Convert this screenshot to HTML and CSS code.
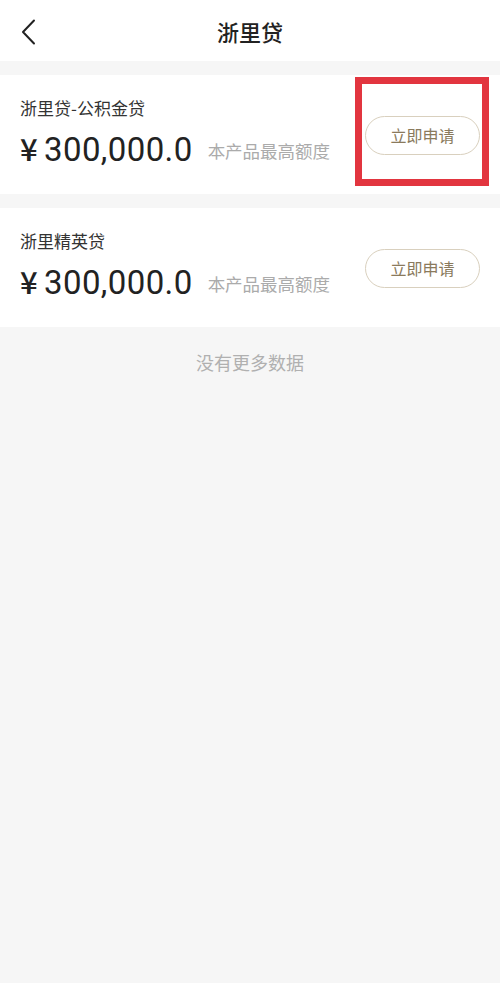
FILE: index.html
```html
<!DOCTYPE html>
<html lang="zh-CN">
<head>
<meta charset="utf-8">
<title>浙里贷</title>
<link rel="stylesheet" href="styles.css">
</head>
<body>
<header class="nav">
  <svg class="back" width="16" height="26" viewBox="0 0 16 26"><path d="M14 1.5 L3 13 L14 24.5" fill="none" stroke="#222" stroke-width="2" stroke-linecap="round" stroke-linejoin="round"/></svg>
  <h1 class="nav-title">浙里贷</h1>
</header>
<main class="list">
  <section class="card">
    <div class="info">
      <div class="name">浙里贷-公积金贷</div>
      <div class="amount-row"><span class="amount"><span class="yen">¥</span>300,000.0</span><span class="hint">本产品最高额度</span></div>
    </div>
    <button class="apply">立即申请</button>
    <div class="mark"></div>
  </section>
  <section class="card">
    <div class="info">
      <div class="name">浙里精英贷</div>
      <div class="amount-row"><span class="amount"><span class="yen">¥</span>300,000.0</span><span class="hint">本产品最高额度</span></div>
    </div>
    <button class="apply">立即申请</button>
  </section>
  <p class="nomore">没有更多数据</p>
</main>
</body>
</html>
```
FILE: styles.css
```css
html, body {
  margin: 0;
  padding: 0;
  background: #f6f6f6;
  font-family: Roboto, "Noto Sans CJK SC", sans-serif;
  color: #222;
}
.nav {
  height: 61px;
  background: #fff;
  display: flex;
  align-items: center;
  justify-content: center;
  position: relative;
}
.back {
  position: absolute;
  left: 20px;
  top: 19px;
}
.nav-title {
  margin: 0;
  font-size: 22px;
  font-weight: 500;
  color: #222;
  font-family: "Noto Sans CJK SC", sans-serif;
}
.list {
  padding-top: 14px;
  display: flex;
  flex-direction: column;
  gap: 14px;
}
.card {
  background: #fff;
  height: 119px;
  box-sizing: border-box;
  padding: 21px 20px 0;
  display: flex;
  align-items: flex-start;
  justify-content: space-between;
  position: relative;
}
.info {
  display: flex;
  flex-direction: column;
  gap: 8px;
}
.name {
  font-family: "Noto Sans CJK SC", sans-serif;
  font-size: 17px;
  line-height: 24px;
  color: #333;
}
.amount-row {
  display: flex;
  align-items: center;
  gap: 15px;
}
.amount {
  font-size: 33px;
  line-height: 40px;
  color: #222;
  letter-spacing: 0.4px;
}
.yen {
  display: inline-block;
  width: 24px;
  font-size: 31px;
  font-family: "Noto Sans CJK SC", sans-serif;
  font-weight: 500;
}
.hint {
  font-family: "Noto Sans CJK SC", sans-serif;
  font-size: 17.5px;
  color: #ababab;
  padding-top: 2px;
}
.apply {
  align-self: center;
  margin-top: -20px;
  width: 115px;
  height: 39px;
  border: 1px solid #d9d0be;
  border-radius: 20px;
  background: #fff;
  color: #8a7a5c;
  font-family: "Noto Sans CJK SC", sans-serif;
  font-size: 16px;
  padding: 0;
}
.mark {
  position: absolute;
  left: 355px;
  top: 2px;
  width: 134px;
  height: 109px;
  box-sizing: border-box;
  border: 7px solid #e2353f;
}
.nomore {
  margin: 8px 0 0;
  text-align: center;
  font-family: "Noto Sans CJK SC", sans-serif;
  font-size: 18px;
  color: #b0b0b0;
}
```
